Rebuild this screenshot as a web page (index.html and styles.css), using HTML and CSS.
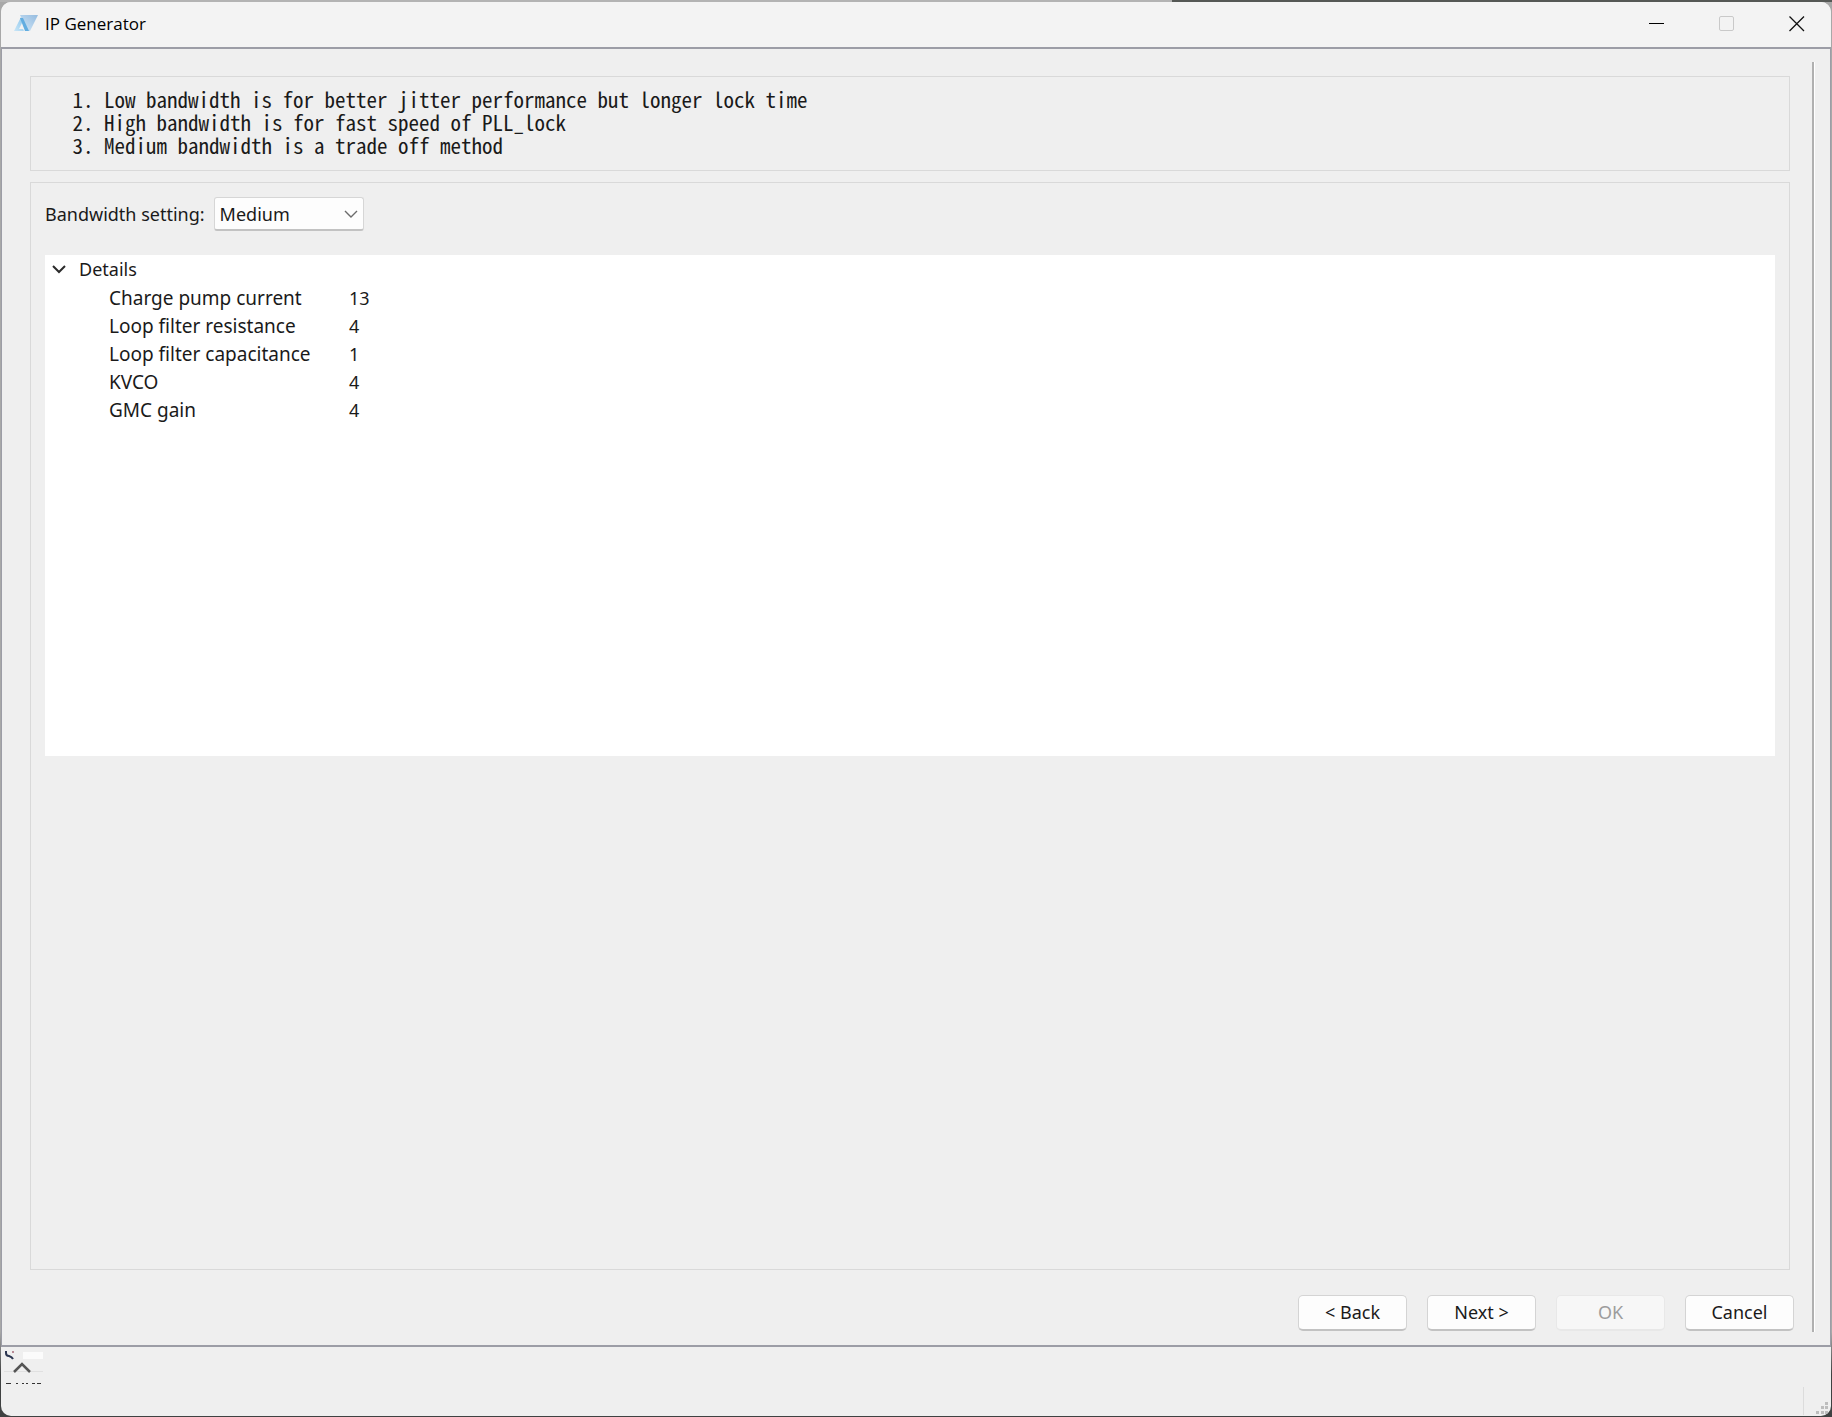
FILE: index.html
```html
<!DOCTYPE html>
<html lang="en">
<head>
<meta charset="utf-8">
<title>IP Generator</title>
<link rel="stylesheet" href="styles.css">
</head>
<body>
<div class="window">
  <header class="titlebar">
    <svg class="logo" width="24" height="17" viewBox="0 0 24 17" aria-hidden="true">
      <defs>
        <linearGradient id="wing" x1="0" y1="1" x2="1" y2="0"><stop offset="0" stop-color="#d3e8f8"/><stop offset="1" stop-color="#94bbdf"/></linearGradient>
        <linearGradient id="leg" x1="0" y1="1" x2="1" y2="0"><stop offset="0" stop-color="#c9e6f7"/><stop offset="1" stop-color="#8cc6ec"/></linearGradient>
      </defs>
      <path d="M6 0H24L16 16H14Z" fill="url(#wing)"/>
      <path d="M0 16L7 2L9 6L5 14L9 14L10 16Z" fill="url(#leg)"/>
      <path d="M6 3L9 3L15 16H11Z" fill="#62ade0"/>
    </svg>
    <h1 class="title">IP Generator</h1>
    <div class="caption-buttons">
      <button type="button" class="caption" aria-label="Minimize"><svg width="16" height="16" viewBox="0 0 16 16"><path d="M0 7.500H15" stroke="#000" fill="none"/></svg></button>
      <button type="button" class="caption" aria-label="Maximize" disabled><svg width="16" height="16" viewBox="0 0 16 16"><rect x=".5" y=".5" width="14" height="14" rx="1.500" stroke="#c9c9c9" fill="none"/></svg></button>
      <button type="button" class="caption" aria-label="Close"><svg width="16" height="16" viewBox="0 0 16 16"><path d="M.5.5L15 15M15 .5L.5 15" stroke="#111" stroke-width="1.300" fill="none"/></svg></button>
    </div>
  </header>
  <main class="dialog">
    <div class="page">
      <section class="group notes">
        <ol>
          <li>Low bandwidth is for better jitter performance but longer lock time</li>
          <li>High bandwidth is for fast speed of PLL_lock</li>
          <li>Medium bandwidth is a trade off method</li>
        </ol>
      </section>
      <section class="group settings">
        <div class="field">
          <label for="bandwidth">Bandwidth setting:</label>
          <div class="combo">
            <select id="bandwidth"><option>Low</option><option selected>Medium</option><option>High</option></select>
            <svg class="arrow" width="14" height="8" viewBox="0 0 14 8" aria-hidden="true"><path d="M1 1L7 7L13 1" fill="none" stroke="#6b6b6b" stroke-width="1.400"/></svg>
          </div>
        </div>
        <div class="tree">
          <button type="button" class="toggle" aria-expanded="true" aria-controls="details">
            <svg width="14" height="9" viewBox="0 0 14 9" aria-hidden="true"><path d="M1 1L7 7L13 1" fill="none" stroke="#2b2b2b" stroke-width="2"/></svg>
            Details
          </button>
          <table id="details">
            <tr><th scope="row">Charge pump current</th><td>13</td></tr>
            <tr><th scope="row">Loop filter resistance</th><td>4</td></tr>
            <tr><th scope="row">Loop filter capacitance</th><td>1</td></tr>
            <tr><th scope="row">KVCO</th><td>4</td></tr>
            <tr><th scope="row">GMC gain</th><td>4</td></tr>
          </table>
        </div>
      </section>
      <footer class="actions">
        <button type="button" class="push">&lt; Back</button>
        <button type="button" class="push">Next &gt;</button>
        <button type="button" class="push" disabled>OK</button>
        <button type="button" class="push">Cancel</button>
      </footer>
    </div>
    <div class="splitter"></div>
  </main>
  <div class="statusbar">
    <svg class="expander" width="40" height="38" viewBox="0 0 40 38" aria-hidden="true">
      <path d="M2 1V3Q2 6 5 6Q8 7 9 9" fill="none" stroke="#2b3550" stroke-width="2"/>
      <path d="M8 1h2v2h-2z" fill="#b98a96"/>
      <rect x="19" y="2" width="20" height="7" fill="#fbfbfb"/>
      <path d="M0 21.500H39" stroke="#e0e0e0"/>
      <path d="M10 22L18 14L26 22" fill="none" stroke="#555" stroke-width="2.500"/>
      <path d="M2 33.500H7M12 33.500H14M18 33.500H20M22 33.500H24M28 33.500H31M33 33.500H37" stroke="#333"/>
    </svg>
    <div class="grip-area">
      <svg width="12" height="12" viewBox="0 0 12 12" fill="#bdbdbd" aria-hidden="true"><path d="M9 0h3v3h-3zM5 4h3v3h-3zM9 4h3v3h-3zM0 9h3v3h-3zM5 9h3v3h-3zM9 9h3v3h-3z"/></svg>
    </div>
  </div>
</div>
</body>
</html>
```
FILE: styles.css
```css
* { box-sizing: border-box; }

body {
  margin: 0;
  min-height: 100vh;
  display: flex;
  padding: 2px 1px 1px;
  background: linear-gradient(90deg, #b3b3b3 64%, #555855 64%) top / 100% 2px no-repeat,
    linear-gradient(#a8a8a8 94%, #3f4141 97%);
  font-family: "Noto Sans", "Noto Sans CJK SC", sans-serif;
  font-size: 18px;
  color: #1a1a1a;
}

button, select { font: inherit; color: inherit; }

.window {
  flex: 1;
  display: flex;
  flex-direction: column;
  background: #efefef;
  border-radius: 10px;
  overflow: hidden;
}

.titlebar {
  display: flex;
  align-items: center;
  height: 45px;
  padding: 0 0 2px 13px;
  background: #f3f3f3;
}

.title {
  flex: 1;
  margin: 0 0 0 7px;
  font-family: "Open Sans", sans-serif;
  font-size: 17px;
  font-weight: 400;
  color: #000;
}

.caption-buttons { display: flex; }

.caption {
  width: 70px;
  height: 43px;
  padding: 0 0 0 1px;
  border: 0;
  background: none;
  display: grid;
  place-items: center;
}

.dialog {
  flex: 1;
  display: flex;
  border: 2px solid #9c9da6;
  border-left-width: 1px;
  border-right-width: 1px;
}

.page {
  flex: 1;
  display: flex;
  flex-direction: column;
  padding: 27px 18px 14px 28px;
}

.group {
  border: 1px solid #d9d9d9;
  margin-right: 4px;
}

.notes {
  padding: 11px 0 13px;
  margin-bottom: 11px;
}

.notes ol {
  margin: 0;
  padding-left: 73px;
  font-family: "Noto Sans Mono CJK SC", "Liberation Mono", monospace;
  font-size: 21px;
  line-height: 23px;
}

.settings {
  flex: 1;
  padding: 14px;
}

.field {
  display: flex;
  align-items: center;
  gap: 9px;
  margin-bottom: 24px;
}

.combo { display: grid; align-items: center; }

.combo select,
.arrow { grid-area: 1 / 1; }

.combo select {
  appearance: none;
  width: 150px;
  height: 34px;
  padding: 0 5px;
  border: 1px solid #d6d6d6;
  border-bottom: 2px solid #c2c2c2;
  border-radius: 3px;
  background: #fdfdfd;
}

.arrow {
  justify-self: end;
  margin-right: 6px;
  pointer-events: none;
}

.tree {
  height: 501px;
  padding: 0 7px;
  background: #fff;
}

.toggle {
  display: flex;
  align-items: center;
  gap: 13px;
  height: 28px;
  padding: 0;
  border: 0;
  background: none;
}

.tree table { border-collapse: collapse; margin: 1px 0 0 57px; }
.tree th { width: 240px; padding: 0; text-align: left; font-size: 19px; font-weight: 400; }
.tree td { padding: 0; }
.tree tr { height: 28px; line-height: 28px; }

.actions {
  display: flex;
  justify-content: flex-end;
  gap: 20px;
  margin-top: 25px;
}

.push {
  width: 109px;
  height: 36px;
  padding: 0 0 1px;
  border: 1px solid #d4d4d4;
  border-bottom: 2px solid #c2c2c2;
  border-radius: 5px;
  background: #fdfdfd;
}

.push:disabled {
  border-color: #e8e8e8;
  background: #f7f7f7;
  color: #9d9d9d;
}

.splitter {
  width: 3px;
  margin: 13px 15px 13px 0;
  border-left: 2px solid #b0b0b0;
  border-right: 1px solid #fff;
}

.statusbar {
  display: flex;
  justify-content: space-between;
  height: 69px;
  padding: 3px 1px 1px 3px;
}

.grip-area {
  align-self: flex-end;
  display: flex;
  align-items: flex-end;
  height: 28px;
  padding: 0 2px 1px 12px;
  border-left: 1px solid #dcdcdc;
}
```
